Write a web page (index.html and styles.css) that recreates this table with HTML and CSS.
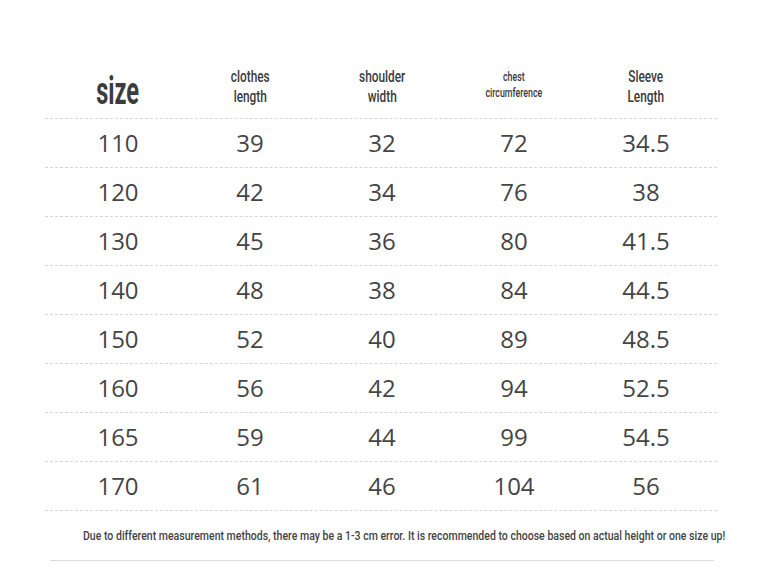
FILE: index.html
```html
<!DOCTYPE html>
<html>
<head>
<meta charset="utf-8">
<link rel="stylesheet" href="styles.css">
</head>
<body>
<div class="page">
  <div class="table">
    <div class="row head">
      <div class="cell"><span class="h-size">size</span></div>
      <div class="cell"><span class="h-txt">clothes<br>length</span></div>
      <div class="cell"><span class="h-txt">shoulder<br>width</span></div>
      <div class="cell"><span class="h-small">chest<br>circumference</span></div>
      <div class="cell"><span class="h-txt">Sleeve<br>Length</span></div>
    </div>
    <div class="row"><div class="cell">110</div><div class="cell">39</div><div class="cell">32</div><div class="cell">72</div><div class="cell">34.5</div></div>
    <div class="row"><div class="cell">120</div><div class="cell">42</div><div class="cell">34</div><div class="cell">76</div><div class="cell">38</div></div>
    <div class="row"><div class="cell">130</div><div class="cell">45</div><div class="cell">36</div><div class="cell">80</div><div class="cell">41.5</div></div>
    <div class="row"><div class="cell">140</div><div class="cell">48</div><div class="cell">38</div><div class="cell">84</div><div class="cell">44.5</div></div>
    <div class="row"><div class="cell">150</div><div class="cell">52</div><div class="cell">40</div><div class="cell">89</div><div class="cell">48.5</div></div>
    <div class="row"><div class="cell">160</div><div class="cell">56</div><div class="cell">42</div><div class="cell">94</div><div class="cell">52.5</div></div>
    <div class="row"><div class="cell">165</div><div class="cell">59</div><div class="cell">44</div><div class="cell">99</div><div class="cell">54.5</div></div>
    <div class="row"><div class="cell">170</div><div class="cell">61</div><div class="cell">46</div><div class="cell">104</div><div class="cell">56</div></div>
  </div>
  <div class="note"><span class="note-txt">Due to different measurement methods, there may be a 1-3 cm error. It is recommended to choose based on actual height or one size up!</span></div>
</div>
</body>
</html>
```

FILE: styles.css
```css
* { box-sizing: border-box; }
html, body { margin: 0; padding: 0; background: #fff; }
body { width: 764px; height: 573px; overflow: hidden; font-family: "Open Sans", "Noto Sans", sans-serif; color: #444; }
.page { padding-top: 59px; }
.table { margin-left: 45px; width: 672px; }
.row {
  display: grid;
  grid-template-columns: repeat(5, 132px);
  padding: 0 5px 0 7px;
  height: 49px;
  align-items: center;
  border-bottom: 1px dashed #d6d6d6;
}
.row.head { height: 60px; }
.cell {
  text-align: center;
  font-size: 24px;
  line-height: 1;
  color: #454545;
}
.head .cell { display: flex; justify-content: center; }
.h-size {
  display: inline-block;
  font-family: "Roboto", sans-serif;
  font-weight: 700;
  font-size: 38px;
  color: #3c3c3c;
  transform: scaleX(0.62);
  margin-top: 4px;
}
.h-txt {
  display: inline-block;
  font-family: "Roboto", sans-serif;
  font-weight: 500;
  font-size: 16px;
  line-height: 20px;
  color: #3a3a3a;
  transform: scaleX(0.74);
  margin-top: -3px;
  white-space: nowrap;
}
.h-small {
  display: inline-block;
  font-family: "Roboto", sans-serif;
  font-weight: 500;
  font-size: 13px;
  line-height: 16px;
  color: #3a3a3a;
  transform: scaleX(0.68);
  margin-top: -8px;
  white-space: nowrap;
}
.note {
  margin-left: 50px;
  width: 664px;
  height: 50px;
  border-bottom: 1px solid #dcdcdc;
  display: flex;
  align-items: center;
  padding-left: 33px;
  white-space: nowrap;
}
.note-txt {
  display: inline-block;
  font-family: "Roboto", sans-serif;
  font-weight: 500;
  font-size: 13px;
  color: #444;
  transform: scaleX(0.81);
  transform-origin: left center;
}
```
